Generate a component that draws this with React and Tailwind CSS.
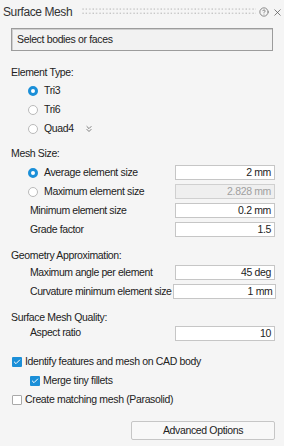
import React from 'react';
import { ChevronsDown, CircleHelp, X, Check } from 'lucide-react';

// Radio button, blue ring when selected
const Radio = ({ checked }) => (
  <span
    className={
      checked
        ? 'w-[10px] h-[10px] rounded-full border-[3px] border-[#1b8fd8] bg-white shrink-0'
        : 'w-[10px] h-[10px] rounded-full border border-[#b9b9b9] bg-white shrink-0'
    }
  />
);

const Checkbox = ({ checked }) =>
  checked ? (
    <span className="w-[10px] h-[10px] rounded-[1px] bg-[#1b8fd8] flex items-center justify-center shrink-0">
      <Check size={8} strokeWidth={3} color="#fff" />
    </span>
  ) : (
    <span className="w-[10px] h-[10px] rounded-[1px] border border-[#a9a9a9] bg-white shrink-0" />
  );

const Field = ({ value, disabled, wide }) => (
  <div
    className={
      (wide ? 'w-[103px] ' : 'w-[100px] ') +
      (disabled
        ? 'bg-[#efefef] text-[#a0a0a0] border-[#d0d0d0] '
        : 'bg-white text-[#222] border-[#c6c6c6] ') +
      'ml-auto shrink-0 h-[15px] border flex items-center justify-end pr-[3px] leading-none'
    }
  >
    {value}
  </div>
);

const Section = ({ children }) => (
  <div className="h-[14px] flex items-center pl-[11px]">{children}</div>
);

const RadioRow = ({ checked, label, value, disabled }) => (
  <div className="h-[19px] flex items-center pl-[28px] pr-[9px]">
    <Radio checked={checked} />
    <span className="ml-[6px] whitespace-nowrap">{label}</span>
    <Field value={value} disabled={disabled} />
  </div>
);

const FieldRow = ({ label, value, wide, h = 'h-[19px]' }) => (
  <div className={'flex items-center pl-[30px] pr-[9px] ' + h}>
    <span className="whitespace-nowrap tracking-[-0.4px] mr-[2px]">{label}</span>
    <Field value={value} wide={wide} />
  </div>
);

const Grip = () => (
  <svg width="174" height="8" viewBox="0 0 174 8" className="ml-[10px] shrink-0">
    <defs>
      <pattern id="dots" width="3.4" height="4.3" patternUnits="userSpaceOnUse">
        <rect x="0.5" y="0.5" width="1" height="1" fill="#9a9a9a" />
      </pattern>
    </defs>
    <rect x="0" y="0" width="174" height="8" fill="url(#dots)" />
  </svg>
);

export default function App() {
  return (
    <div className='w-[284px] h-[446px] bg-[#f5f5f5] text-[#222] text-[10.5px] tracking-[-0.35px] font-["Liberation_Sans",Arial,sans-serif] overflow-hidden'>
      {/* title bar */}
      <div className="h-[24px] flex items-center pl-[3px] pr-[1px]">
        <span className="text-[12px] tracking-[-0.4px] text-[#333] whitespace-nowrap shrink-0">Surface Mesh</span>
        <Grip />
        <CircleHelp size={10} strokeWidth={1.8} color="#666" className="ml-auto shrink-0" />
        <X size={11} strokeWidth={1.6} color="#555" className="ml-[3px] shrink-0" />
      </div>

      {/* selection */}
      <div className="mx-[11px] mt-[4px] h-[23px] border border-[#9c9c9c] bg-[#f2f2f2] shadow-[inset_1px_1px_0_#cfcfcf] flex items-center pl-[5px] text-[#222]">
        Select bodies or faces
      </div>

      {/* element type */}
      <div className="mt-[13px] h-[17px] flex items-center pl-[11px]">Element Type:</div>
      <div className="h-[19px] flex items-center pl-[28px]">
        <Radio checked />
        <span className="ml-[6px]">Tri3</span>
      </div>
      <div className="h-[19px] flex items-center pl-[28px]">
        <Radio />
        <span className="ml-[6px]">Tri6</span>
      </div>
      <div className="h-[19px] flex items-center pl-[28px]">
        <Radio />
        <span className="ml-[6px]">Quad4</span>
        <ChevronsDown size={10} strokeWidth={1.8} color="#555" className="ml-[10px]" />
      </div>

      {/* mesh size */}
      <div className="mt-[7px] h-[18px] flex items-center pl-[11px]">Mesh Size:</div>
      <RadioRow checked label="Average element size" value="2 mm" />
      <RadioRow label="Maximum element size" value="2.828 mm" disabled />
      <FieldRow label="Minimum element size" value="0.2 mm" />
      <FieldRow label="Grade factor" value="1.5" />

      {/* geometry approximation */}
      <div className="mt-[10px]">
        <Section>Geometry Approximation:</Section>
      </div>
      <FieldRow label="Maximum angle per element" value="45 deg" />
      <FieldRow label="Curvature minimum element size" value="1 mm" wide />

      {/* quality */}
      <div className="mt-[10px]">
        <Section>Surface Mesh Quality:</Section>
      </div>
      <FieldRow label="Aspect ratio" value="10" h="h-[16px]" />

      {/* options */}
      <div className="mt-[11px] h-[19px] flex items-center pl-[12px]">
        <Checkbox checked />
        <span className="ml-[3px]">Identify features and mesh on CAD body</span>
      </div>
      <div className="h-[19px] flex items-center pl-[30px]">
        <Checkbox checked />
        <span className="ml-[3px]">Merge tiny fillets</span>
      </div>
      <div className="h-[19px] flex items-center pl-[12px]">
        <Checkbox />
        <span className="ml-[3px]">Create matching mesh (Parasolid)</span>
      </div>

      <div className="mt-[12px] flex justify-end pr-[9px]">
        <button className="w-[144px] h-[19px] border border-[#c6c6c6] rounded-[2px] bg-[#f8f8f8] text-[#222] text-[10.5px] tracking-[-0.35px] flex items-center justify-center">
          Advanced Options
        </button>
      </div>
    </div>
  );
}
